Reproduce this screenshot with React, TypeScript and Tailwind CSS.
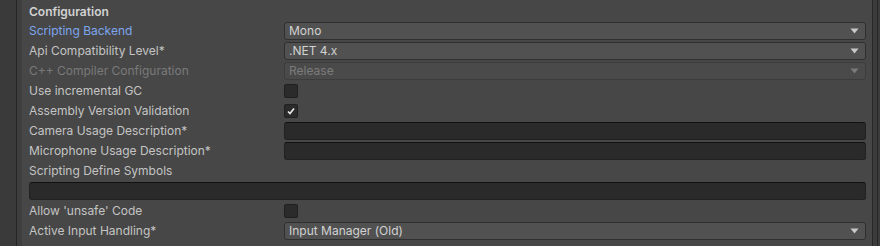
import React from "react";

type Row =
  | { kind: "dropdown"; label: string; value: string; blue?: boolean; disabled?: boolean }
  | { kind: "check"; label: string; checked?: boolean }
  | { kind: "text"; label: string };

const rowsTop: Row[] = [
  { kind: "dropdown", label: "Scripting Backend", value: "Mono", blue: true },
  { kind: "dropdown", label: "Api Compatibility Level*", value: ".NET 4.x" },
  { kind: "dropdown", label: "C++ Compiler Configuration", value: "Release", disabled: true },
  { kind: "check", label: "Use incremental GC" },
  { kind: "check", label: "Assembly Version Validation", checked: true },
  { kind: "text", label: "Camera Usage Description*" },
  { kind: "text", label: "Microphone Usage Description*" },
];

function Arrow({ disabled }: { disabled?: boolean }) {
  return (
    <svg width="9" height="6" viewBox="0 0 9 6" className="shrink-0">
      <path d="M0.5 0.5 H8.5 L4.5 5.5 Z" fill={disabled ? "#7a7a7a" : "#c8c8c8"} />
    </svg>
  );
}

function Dropdown({ value, disabled }: { value: string; disabled?: boolean }) {
  return (
    <div
      className={`flex-1 h-[18px] rounded-[3px] border flex items-center justify-between pl-[4px] pr-[6px] ${
        disabled ? "bg-[#4a4a4a] border-[#3c3c3c] text-[#7c7c7c]" : "bg-[#515151] border-[#2f2f2f] text-[#d2d2d2]"
      }`}
    >
      <span>{value}</span>
      <Arrow disabled={disabled} />
    </div>
  );
}

function Checkbox({ checked }: { checked?: boolean }) {
  return (
    <div className="w-[14px] h-[14px] rounded-[2px] bg-[#2b2b2b] border border-[#202020] flex items-center justify-center">
      {checked && (
        <svg width="10" height="10" viewBox="0 0 10 10">
          <path d="M2 5.5 L4 7.5 L8 2.5" stroke="#e8e8e8" strokeWidth="1.7" fill="none" />
        </svg>
      )}
    </div>
  );
}

function TextField({ className = "" }: { className?: string }) {
  return (
    <div className={`h-[18px] rounded-[3px] bg-[#2a2a2a] border border-[#212121] border-t-[#111111] ${className}`} />
  );
}

function Field({ row }: { row: Row }) {
  const labelColor =
    row.kind === "dropdown" && row.blue
      ? "text-[#7ea6ee]"
      : row.kind === "dropdown" && row.disabled
      ? "text-[#7a7a7a]"
      : "text-[#c4c4c4]";
  return (
    <div className="h-[20px] flex items-center">
      <div className={`w-[255px] shrink-0 ${labelColor}`}>{row.label}</div>
      <div className="flex-1 flex items-center">
        {row.kind === "dropdown" && <Dropdown value={row.value} disabled={row.disabled} />}
        {row.kind === "check" && <Checkbox checked={row.checked} />}
        {row.kind === "text" && <TextField className="flex-1" />}
      </div>
    </div>
  );
}

export default function App() {
  return (
    <div
      className="w-[880px] h-[246px] bg-[#474747] flex overflow-hidden text-[12px] leading-none"
      style={{ fontFamily: "Inter, 'Noto Sans', sans-serif" }}
    >
      <div className="w-[16px] bg-[#3a3a3a]" />
      <div className="w-[1px] bg-[#242424]" />
      <div className="w-[5px] bg-[#3e3e3e]" />
      <div className="flex-1 pl-[7px] pr-[6px] flex flex-col">
        <div className="h-[21px] pt-[2px] flex items-center font-semibold text-[#d2d2d2]">Configuration</div>
        {rowsTop.map((r) => (
          <Field key={r.label} row={r} />
        ))}
        <div className="h-[20px] flex items-center text-[#c4c4c4]">Scripting Define Symbols</div>
        <div className="h-[20px] flex items-center">
          <TextField className="w-full" />
        </div>
        <Field row={{ kind: "check", label: "Allow 'unsafe' Code" }} />
        <Field row={{ kind: "dropdown", label: "Active Input Handling*", value: "Input Manager (Old)" }} />
      </div>
      <div className="w-[1px] bg-[#262626]" />
      <div className="w-[4px] bg-[#3c3c3c]" />
      <div className="w-[1px] bg-[#262626]" />
      <div className="w-[2px] bg-[#3c3c3c]" />
    </div>
  );
}
